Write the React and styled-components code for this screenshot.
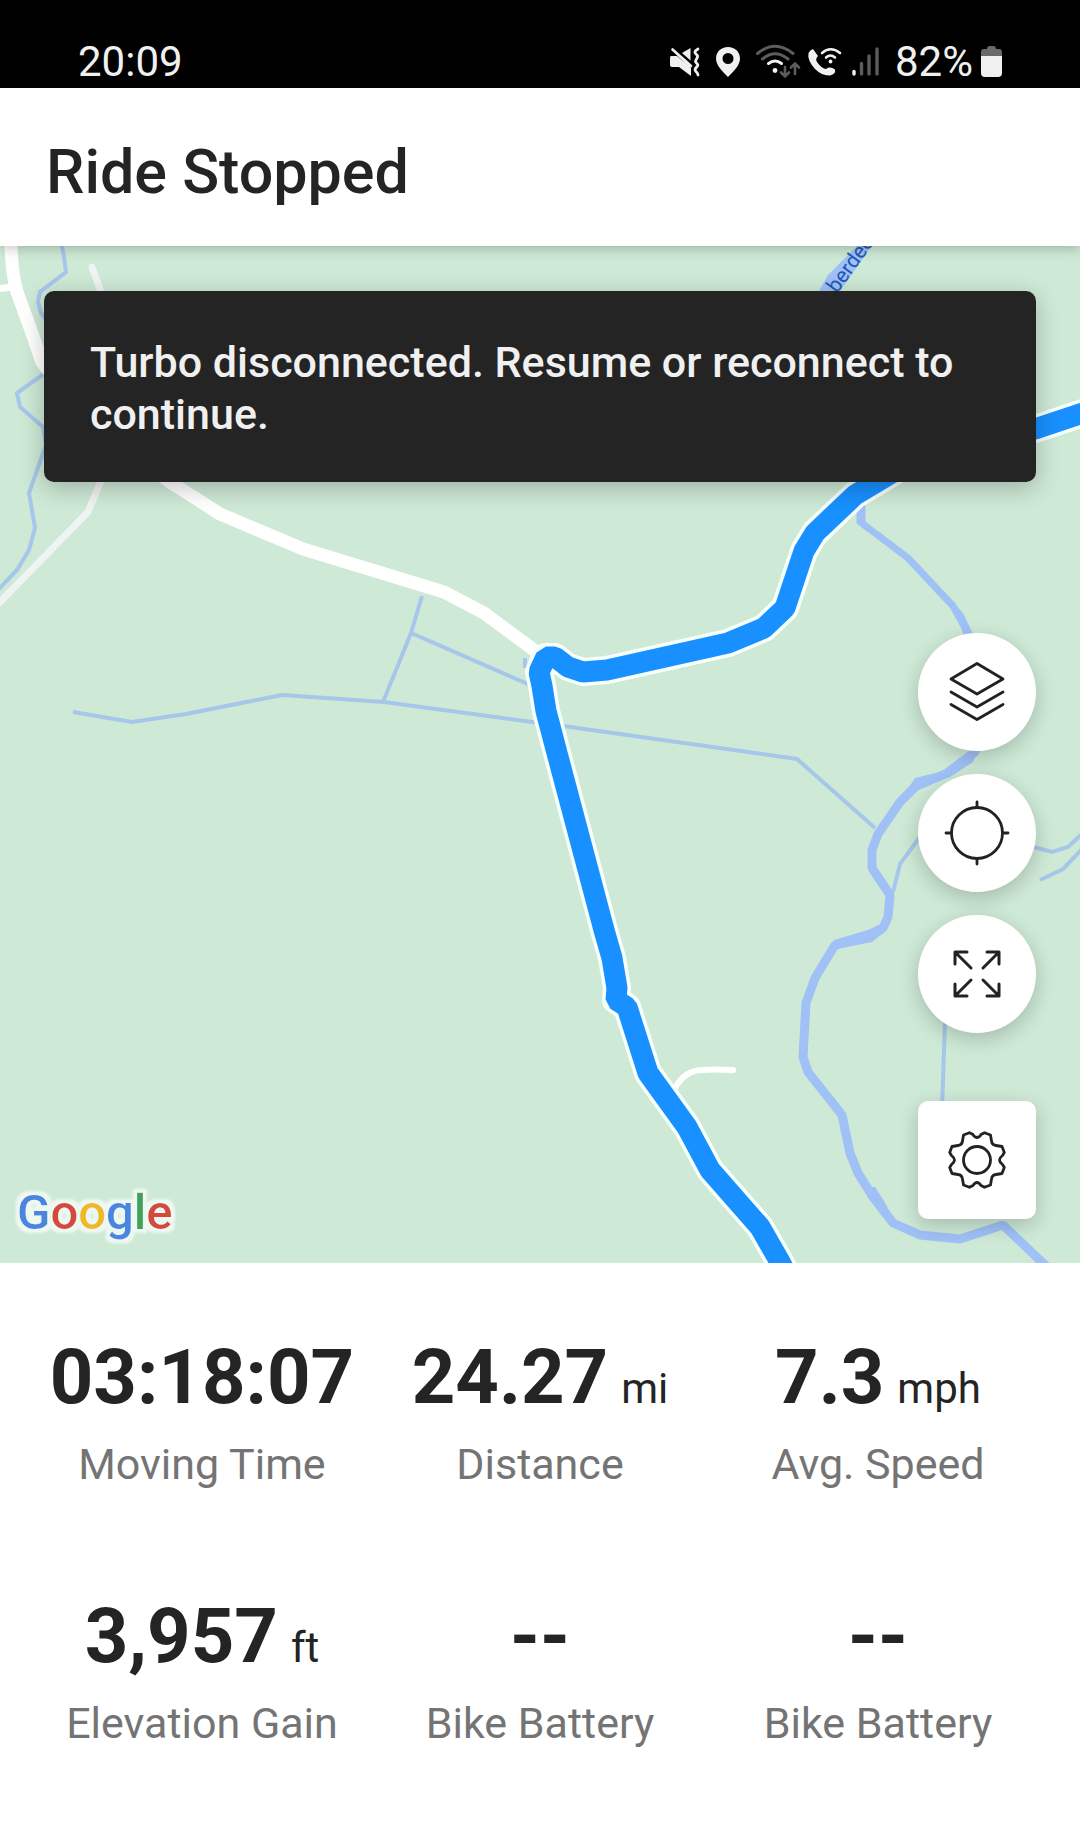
import React from 'react';
import styled, { createGlobalStyle } from 'styled-components';

const GlobalStyle = createGlobalStyle`
  *, *::before, *::after { box-sizing: border-box; }
  body {
    margin: 0;
    background: #fff;
    color: #242424;
    font-family: Roboto, "Liberation Sans", sans-serif;
  }
  h1, p, dl, dt, dd { margin: 0; }
`;

const Page = styled.div`
  display: flex;
  flex-direction: column;
  min-height: 100vh;
`;

const StatusBar = styled.div`
  display: flex;
  align-items: center;
  justify-content: space-between;
  height: 88px;
  padding: 36px 78px 0;
  background: #000;
  color: #f0f0f0;
  font-size: 42px;
  line-height: 48px;
`;

const StatusIcons = styled.div`
  display: flex;
  align-items: center;
  gap: 8px;
`;

const StatusGroup = styled.div`
  display: flex;
  align-items: center;
  gap: ${(p) => p.$gap}px;
  margin-right: ${(p) => p.$after || 0}px;
`;

const Glyph = styled.svg`
  display: block;
  flex: none;
  overflow: visible;
`;

const Header = styled.header`
  position: relative;
  z-index: 1;
  padding: 48px 46px 38px;
  background: #fff;
  box-shadow: 0 2px 12px rgba(0, 0, 0, 0.25);
`;

const Title = styled.h1`
  font-size: 61px;
  font-weight: 500;
  line-height: 72px;
`;

const MapArea = styled.main`
  position: relative;
  display: flex;
  flex-direction: column;
  padding: 45px 44px 44px;
  background: #cee9d6;
  overflow: hidden;
`;

const MapCanvas = styled.svg`
  position: absolute;
  inset: 0;
  width: 100%;
  height: 100%;
`;

const Banner = styled.p`
  position: relative;
  margin-bottom: 151px;
  padding: 45px 46px 42px;
  border-radius: 10px;
  background: #242424;
  color: #f0f0f0;
  box-shadow: 0 6px 24px rgba(0, 0, 0, 0.24);
  font-size: 43px;
  font-weight: 500;
  line-height: 52px;
`;

const Controls = styled.div`
  position: relative;
  display: flex;
  flex-direction: column;
  align-self: flex-end;
  gap: 23px;
`;

const MapButton = styled.button`
  display: grid;
  place-items: center;
  width: 118px;
  height: 118px;
  margin: ${(p) => (p.$square ? '45px 0 0' : 0)};
  padding: 0;
  border: 0;
  border-radius: ${(p) => (p.$square ? '10px' : '50%')};
  background: #fff;
  color: #222;
  box-shadow: 0 6px 20px rgba(0, 0, 0, 0.2);
  cursor: pointer;
`;

const Stats = styled.dl`
  display: grid;
  grid-template-columns: repeat(3, 1fr);
  row-gap: 98px;
  padding: 66px 33px 72px;
  background: #fff;
`;

const Stat = styled.div`
  display: flex;
  flex-direction: column-reverse;
  align-items: center;
  justify-content: flex-end;
  gap: 13px;
`;

const StatLabel = styled.dt`
  color: #747474;
  font-size: 43px;
  line-height: 52px;
`;

const StatValue = styled.dd`
  display: flex;
  align-items: baseline;
  gap: 13px;
  font-size: 76px;
  font-weight: 700;
  line-height: 96px;
  white-space: nowrap;
`;

const Unit = styled.span`
  font-size: 42px;
  font-weight: 400;
  line-height: 52px;
`;

const LogoText = styled.text`
  font-family: Roboto, sans-serif;
  font-size: 49px;
  font-weight: 500;
`;

const RiverLabel = styled.text`
  font-family: Roboto, sans-serif;
  font-size: 21px;
  fill: #2257b5;
`;

const MuteIcon = () => (
  <Glyph width="30" height="34" viewBox="0 0 30 34" aria-hidden="true">
    <path d="M1 11H7L21 23V31L9 22H2Q0 22 0 20V13Q0 11 1 11Z" fill="currentColor" />
    <path d="M12 8L20.500 3V15.500Z" fill="currentColor" />
    <path d="M7 10L3 5L20.500 19V24Z" fill="currentColor" />
    <path d="M2.500 4.500L21 21" stroke="currentColor" strokeWidth="2.600" strokeLinecap="round" />
    <path d="M28 4C23 7 25 8 27 10S26 14 25.500 16S29 19 27.500 21S24 24 25.500 26S28 28 28 30" fill="none" stroke="currentColor" strokeWidth="2.800" strokeLinecap="round" />
  </Glyph>
);

const PinIcon = () => (
  <Glyph width="24" height="34" viewBox="0 0 24 34" aria-hidden="true">
    <path fillRule="evenodd" d="M12 2C5 2 0 7 0 13.500C0 20 6 26 12 32C18 26 24 20 24 13.500C24 7 19 2 12 2ZM12 8A5.500 5.500 0 1 1 12 19A5.500 5.500 0 1 1 12 8Z" fill="currentColor" />
  </Glyph>
);

const WifiIcon = () => (
  <Glyph width="44" height="34" viewBox="0 0 44 34" fill="none" strokeLinecap="round" aria-hidden="true">
    <g stroke="#5c5c5c" strokeWidth="3">
      <path d="M1.500 8.500Q19 -6 37 8.500" />
      <path d="M6.500 14Q19 3.500 32 14" />
      <path d="M29 22V31M25 27.500L29 31.500L33 27.500M39 29V19M35 22.500L39 18.500L43 22.500" strokeWidth="2.600" />
    </g>
    <path d="M12.500 18.500Q19 13.500 25.500 18.500" stroke="currentColor" strokeWidth="3" />
    <circle cx="19" cy="25.500" r="2.400" fill="currentColor" />
  </Glyph>
);

const CallIcon = () => (
  <Glyph width="33" height="34" viewBox="0 0 33 34" fill="none" strokeLinecap="round" aria-hidden="true">
    <path d="M5 4L10 11Q7 14 9 17Q14 24 18 24Q22 21 27 24.500Q28 29 22 30.500Q14 31 7 24Q-1 15 0.500 8Q2 5 5 4Z" fill="currentColor" />
    <path d="M14 8Q22.500 0.500 32 8M18 12.500Q22.500 8.500 27 12.500" stroke="currentColor" strokeWidth="2.600" />
    <circle cx="22.500" cy="16.500" r="1.900" fill="currentColor" />
  </Glyph>
);

const SignalIcon = () => (
  <Glyph width="27" height="34" viewBox="0 0 27 34" strokeWidth="3.400" strokeLinecap="round" aria-hidden="true">
    <path d="M2 26.500V29" stroke="currentColor" />
    <path d="M9.500 18.500V29M17 11V29M25 4V29" stroke="#5c5c5c" />
  </Glyph>
);

const BatteryIcon = () => (
  <Glyph width="21" height="34" viewBox="0 0 21 34" aria-hidden="true">
    <path d="M6 4Q6 1 9 1H12Q15 1 15 4H18Q21 4 21 7V12H0V7Q0 4 3 4Z" fill="#6a6a6a" />
    <path d="M0 11H21V28Q21 32 17 32H4Q0 32 0 28Z" fill="currentColor" />
  </Glyph>
);

const ControlIcon = ({ children }) => (
  <Glyph
    width="70"
    height="70"
    viewBox="-35 -35 70 70"
    fill="none"
    stroke="currentColor"
    strokeWidth="2.800"
    strokeLinecap="round"
    strokeLinejoin="round"
    aria-hidden="true"
  >
    {children}
  </Glyph>
);

const LayersIcon = () => (
  <ControlIcon>
    <path d="M0 -28.500L26 -13L0 2L-26 -13Z" />
    <path d="M-26 0L0 15L26 0M-26 12.500L0 27.500L26 12.500" />
  </ControlIcon>
);

const LocateIcon = () => (
  <ControlIcon>
    <circle r="25.500" />
    <path d="M0 -31V-26M0 31V26M-31 0H-26M31 0H26" />
  </ControlIcon>
);

const ExpandIcon = () => (
  <ControlIcon>
    <path d="M-6 -6L-22 -22M-22 -10V-22H-10M6 -6L22 -22M22 -10V-22H10M-6 6L-22 22M-22 10V22H-10M6 6L22 22M22 10V22H10" strokeWidth="3" />
  </ControlIcon>
);

const GearIcon = () => (
  <ControlIcon>
    <path d="M0 -22.500Q3 -23 4 -25.500L7.500 -27.300L13.500 -25L14.500 -19Q15 -15 19 -14.500L25 -13.500L27.300 -7.500L25.500 -4.500Q19.500 0 25.500 4.500L27.300 7.500L25 13.500L19 14.500Q15 15 14.500 19L13.500 25L7.500 27.300L4 25.500Q0 19.500 -4 25.500L-7.500 27.300L-13.500 25L-14.500 19Q-15 15 -19 14.500L-25 13.500L-27.300 7.500L-25.500 4.500Q-19.500 0 -25.500 -4.500L-27.300 -7.500L-25 -13.500L-19 -14.500Q-15 -15 -14.500 -19L-13.500 -25L-7.500 -27.300L-4 -25.500Q-3 -23 0 -22.500Z" />
    <circle r="13.500" />
  </ControlIcon>
);

const ROUTE =
  'M1100 407L1080 414L1035 429L925 453L900 468L855 495L815 533L804 551L785 608L764 628L728 643L607 670L583 672L568 667L555 657L546 657L539 672L542 686L546 711L557 753L604 930L612 958L617 988L616 1000L627 1007L648 1073L687 1127L710 1170L760 1227L780 1262L792 1284';

const RideMap = () => (
  <MapCanvas viewBox="0 246 1080 1017" preserveAspectRatio="xMidYMid slice" role="img" aria-label="Map of the ride">
    <defs>
      <filter id="halo" x="-10%" y="-20%" width="120%" height="140%">
        <feMorphology in="SourceAlpha" operator="dilate" radius="4" result="spread" />
        <feGaussianBlur in="spread" stdDeviation="1" result="soft" />
        <feFlood floodColor="#eef8f2" />
        <feComposite in2="soft" operator="in" result="plate" />
        <feMerge>
          <feMergeNode in="plate" />
          <feMergeNode in="SourceGraphic" />
        </feMerge>
      </filter>
    </defs>
    <g fill="none" stroke="#a6c6ea" strokeWidth="4">
      <path d="M61 240L64 257L66 272L40 292L38 302L41 313L60 340M60 364L45 373L17 393L20 407L43 427L46 445L29 493L35 528L29 550L17 570L-4 592" />
      <path d="M73 712L132 722L186 714L282 695L384 702L532 722L563 726L797 759L875 828" />
      <path d="M422 596L411 633L383 702M411 633L530 685M525 658V668" />
      <path d="M922 834L900 864L893 892M1030 846L1052 852L1068 847L1084 832M1040 880L1063 869L1084 847M945 1020L942 1110" />
    </g>
    <g fill="none" stroke="#9fc1f6" strokeWidth="9" strokeLinejoin="bevel">
      <path d="M861 500V523" />
      <path d="M859 521L908 558L953 606L969 635" strokeWidth="7" />
      <path d="M969 635L985 690L975 752L947 773L915 787L900 802L878 834L872 850V868L890 895L888 917L883 928L870 937L835 945L815 978L806 1003L803 1057L808 1072L842 1115L850 1153L858 1173L873 1197L893 1223L920 1235L960 1239L1003 1225L1046 1266" />
    </g>
    <g fill="#9fc1f6">
      <path d="M819 291L828 275L845 258L857 246H871L862 260L840 291Z" />
      <path d="M834 940L868 930L885 922L884 932L872 942L835 949Z" />
      <path d="M902 798L915 778L948 770L966 755L978 751L973 762L950 777L915 790Z" />
      <path d="M870 1187H875L884 1201L893 1218L888 1222Z" />
      <path d="M951 600L963 613L974 636H964Z" />
    </g>
    <g fill="none" strokeLinejoin="round" strokeLinecap="round">
      <path d="M92 267L101 292L110 400L103 476L88 512L-4 606" stroke="#eff3f1" strokeWidth="7" />
      <path d="M-4 289L14 287" stroke="#fff" strokeWidth="7" />
      <path d="M11 240Q11 270 17 292L28 322L42 362L90 425L170 482L220 514L303 549L444 592L484 613L538 653" stroke="#fff" strokeWidth="13" />
      <path d="M675 1088Q685 1070 703 1070Q712 1069 733 1070" stroke="#fff" strokeWidth="6" />
      <path d={ROUTE} stroke="#f6fffc" strokeWidth="28" />
      <path d={ROUTE} stroke="#1890ff" strokeWidth="21" strokeLinejoin="bevel" />
    </g>
    <RiverLabel transform="translate(837 294) rotate(-54)">berdee</RiverLabel>
    <LogoText x="17" y="1229" filter="url(#halo)">
      <tspan fill="#4a86e0">G</tspan>
      <tspan fill="#d5493c">o</tspan>
      <tspan fill="#edba25">o</tspan>
      <tspan fill="#4a86e0">g</tspan>
      <tspan fill="#3fa259">l</tspan>
      <tspan fill="#d5493c">e</tspan>
    </LogoText>
  </MapCanvas>
);

const STATS = [
  { id: 'time', label: 'Moving Time', value: '03:18:07' },
  { id: 'distance', label: 'Distance', value: '24.27', unit: 'mi' },
  { id: 'speed', label: 'Avg. Speed', value: '7.3', unit: 'mph' },
  { id: 'elevation', label: 'Elevation Gain', value: '3,957', unit: 'ft' },
  { id: 'battery-1', label: 'Bike Battery', value: '--' },
  { id: 'battery-2', label: 'Bike Battery', value: '--' },
];

export default function App() {
  return (
    <Page>
      <GlobalStyle />
      <StatusBar>
        <time>20:09</time>
        <StatusIcons>
          <StatusGroup $gap={16}>
            <MuteIcon />
            <PinIcon />
            <WifiIcon />
          </StatusGroup>
          <StatusGroup $gap={11} $after={8}>
            <CallIcon />
            <SignalIcon />
          </StatusGroup>
          <span>82%</span>
          <BatteryIcon />
        </StatusIcons>
      </StatusBar>
      <Header>
        <Title>Ride Stopped</Title>
      </Header>
      <MapArea>
        <RideMap />
        <Banner role="status">Turbo disconnected. Resume or reconnect to continue.</Banner>
        <Controls>
          <MapButton type="button" aria-label="Map layers"><LayersIcon /></MapButton>
          <MapButton type="button" aria-label="Centre on my location"><LocateIcon /></MapButton>
          <MapButton type="button" aria-label="Expand map"><ExpandIcon /></MapButton>
          <MapButton type="button" aria-label="Settings" $square><GearIcon /></MapButton>
        </Controls>
      </MapArea>
      <Stats>
        {STATS.map((s) => (
          <Stat key={s.id}>
            <StatLabel>{s.label}</StatLabel>
            <StatValue>
              {s.value}
              {s.unit && <Unit>{s.unit}</Unit>}
            </StatValue>
          </Stat>
        ))}
      </Stats>
    </Page>
  );
}
